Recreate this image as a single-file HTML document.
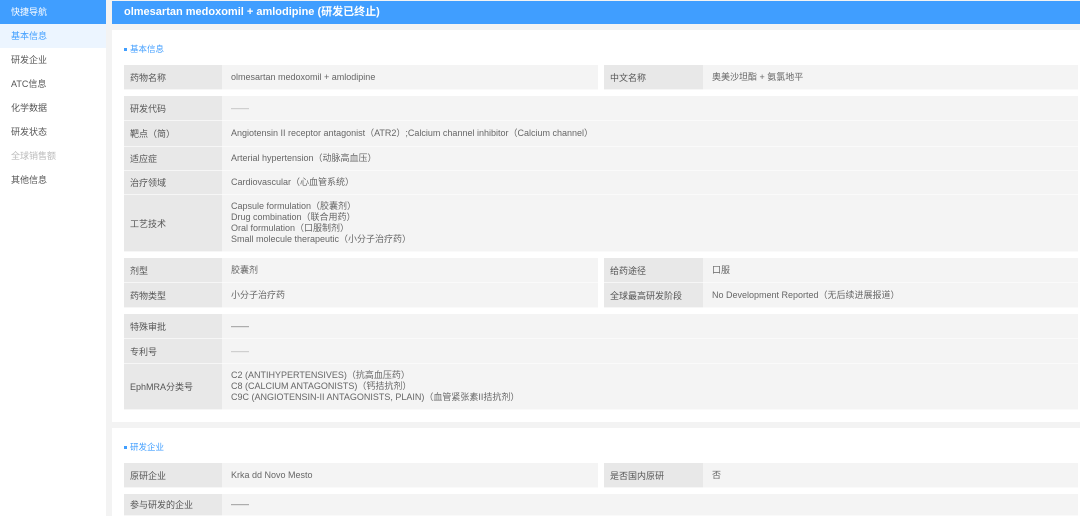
<!DOCTYPE html>
<html><head><meta charset="utf-8"><style>
*{margin:0;padding:0;box-sizing:border-box}
html,body{width:1080px;height:516px;overflow:hidden}
body{background:#f3f3f3;font-family:"Liberation Sans","Noto Sans CJK SC",sans-serif;font-size:9px;color:#555;position:relative}
.side{position:absolute;left:0;top:0;width:106px;height:516px;background:#fff}
.sh{height:24px;background:#409eff;color:#fff;padding-left:11px;line-height:24px}
.si{height:24px;line-height:24px;padding-left:11px;color:#555}
.si.a{background:#ecf5ff;color:#409eff}
.si.d{color:#bbb}
.mh{position:absolute;left:112px;top:1px;width:968px;height:23px;background:#409eff;color:#fff;font-weight:bold;font-size:11px;line-height:23px;padding-left:12px}
.p{position:absolute;left:112px;width:968px;background:#fff}
.t{position:absolute;color:#409eff;font-size:8.5px}
.t:before{content:"";display:inline-block;width:3px;height:3px;background:#409eff;margin-right:3px;vertical-align:middle}
.r{position:absolute;display:flex}
.l{background:#e8e8e8;width:98px;padding-left:6px;display:flex;align-items:center;border-bottom:1px solid #f6f6f6}
.v{background:#f4f4f4;padding-left:9px;display:flex;align-items:center;border-bottom:1px solid #fafafa;line-height:11px;color:#666}
</style></head><body>
<div class="side">
<div class="sh">快捷导航</div>
<div class="si a">基本信息</div><div class="si">研发企业</div><div class="si">ATC信息</div><div class="si">化学数据</div><div class="si">研发状态</div><div class="si d">全球销售额</div><div class="si">其他信息</div>
</div>
<div class="mh">olmesartan medoxomil + amlodipine (研发已终止)</div>
<div class="p" style="top:30px;height:392px"></div>
<div class="p" style="top:428px;height:88px"></div>
<div class="t" style="left:124px;top:43px">基本信息</div>
<div class="t" style="left:124px;top:441px">研发企业</div>

<div class="r" style="left:124px;top:65px;height:25px"><div class="l">药物名称</div><div class="v" style="width:376px">olmesartan medoxomil + amlodipine</div></div>
<div class="r" style="left:604px;top:65px;height:25px"><div class="l" style="width:99px">中文名称</div><div class="v" style="width:375px">奥美沙坦酯 + 氨氯地平</div></div>

<div class="r" style="left:124px;top:96px;height:25px"><div class="l">研发代码</div><div class="v" style="width:856px;color:#aaa">——</div></div>
<div class="r" style="left:124px;top:121px;height:26px"><div class="l">靶点（简）</div><div class="v" style="width:856px">Angiotensin II receptor antagonist（ATR2）;Calcium channel inhibitor（Calcium channel）</div></div>
<div class="r" style="left:124px;top:147px;height:24px"><div class="l">适应症</div><div class="v" style="width:856px">Arterial hypertension（动脉高血压）</div></div>
<div class="r" style="left:124px;top:171px;height:24px"><div class="l">治疗领域</div><div class="v" style="width:856px">Cardiovascular（心血管系统）</div></div>
<div class="r" style="left:124px;top:195px;height:57px"><div class="l">工艺技术</div><div class="v" style="width:856px">Capsule formulation（胶囊剂）<br>Drug combination（联合用药）<br>Oral formulation（口服制剂）<br>Small molecule therapeutic（小分子治疗药）</div></div>

<div class="r" style="left:124px;top:258px;height:25px"><div class="l">剂型</div><div class="v" style="width:376px">胶囊剂</div></div>
<div class="r" style="left:124px;top:283px;height:25px"><div class="l">药物类型</div><div class="v" style="width:376px">小分子治疗药</div></div>
<div class="r" style="left:604px;top:258px;height:25px"><div class="l" style="width:99px">给药途径</div><div class="v" style="width:375px">口服</div></div>
<div class="r" style="left:604px;top:283px;height:25px"><div class="l" style="width:99px">全球最高研发阶段</div><div class="v" style="width:375px">No Development Reported（无后续进展报道）</div></div>

<div class="r" style="left:124px;top:314px;height:25px"><div class="l">特殊审批</div><div class="v" style="width:856px">——</div></div>
<div class="r" style="left:124px;top:339px;height:25px"><div class="l">专利号</div><div class="v" style="width:856px;color:#aaa">——</div></div>
<div class="r" style="left:124px;top:364px;height:46px"><div class="l">EphMRA分类号</div><div class="v" style="width:856px">C2 (ANTIHYPERTENSIVES)（抗高血压药）<br>C8 (CALCIUM ANTAGONISTS)（钙拮抗剂）<br>C9C (ANGIOTENSIN-II ANTAGONISTS, PLAIN)（血管紧张素II拮抗剂）</div></div>

<div class="r" style="left:124px;top:463px;height:25px"><div class="l">原研企业</div><div class="v" style="width:376px">Krka dd Novo Mesto</div></div>
<div class="r" style="left:604px;top:463px;height:25px"><div class="l" style="width:99px">是否国内原研</div><div class="v" style="width:375px">否</div></div>
<div class="r" style="left:124px;top:494px;height:22px"><div class="l">参与研发的企业</div><div class="v" style="width:856px">——</div></div>
</body></html>
